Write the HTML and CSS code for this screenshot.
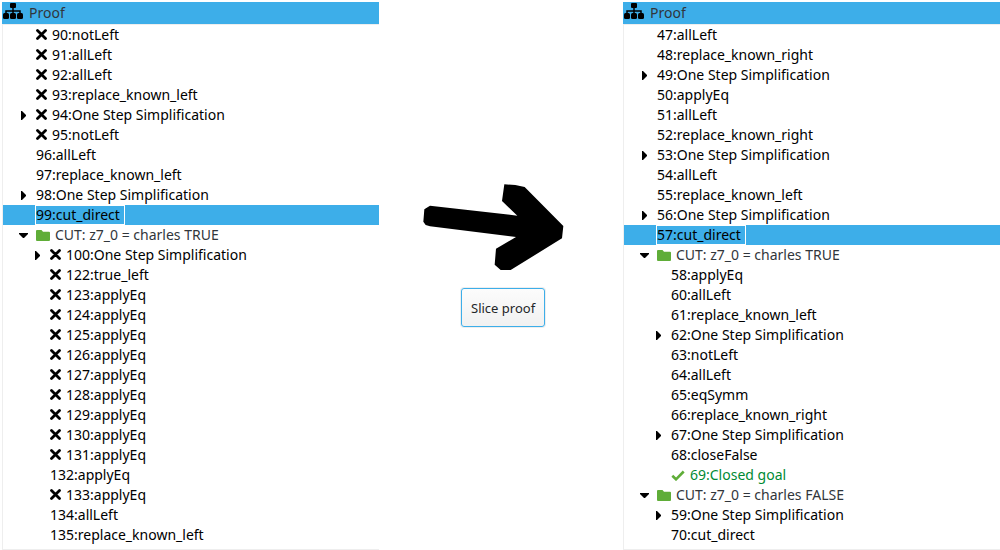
FILE: index.html
```
<!DOCTYPE html>
<html lang="en">
<head>
<meta charset="utf-8">
<title>Proof slicing</title>
<link rel="stylesheet" href="styles.css">
</head>
<body>
<svg class="sprite" aria-hidden="true">
  <symbol id="tree" viewBox="0 0 20 16">
    <rect x="7" y="0" width="6" height="5" rx="1"/>
    <path d="M10 5v6M3 11V8h14v3" fill="none" stroke="#000" stroke-width="1.5"/>
    <rect x="0" y="10" width="6" height="6" rx="1.500"/>
    <rect x="7" y="10" width="6" height="6" rx="1.500"/>
    <rect x="14" y="10" width="6" height="6" rx="1.500"/>
  </symbol>
  <symbol id="cross" viewBox="0 0 11 11">
    <path d="M1.500 1.500l8 8M9.500 1.500l-8 8" fill="none" stroke="#000" stroke-width="2.800" stroke-linecap="round"/>
  </symbol>
  <symbol id="folder" viewBox="0 0 14 11">
    <path d="M1 0h4.500L7 1.700h6a1 1 0 0 1 1 1V10a1 1 0 0 1-1 1H1a1 1 0 0 1-1-1V1a1 1 0 0 1 1-1z" fill="#5fad38"/>
  </symbol>
  <symbol id="check" viewBox="0 0 14 11">
    <path d="M1.300 5.800L5 9.300 12.700 1.500" fill="none" stroke="#5fad38" stroke-width="2.600"/>
  </symbol>
  <symbol id="closed" viewBox="0 0 14 20">
    <path d="M5 6h1l4 4v1l-4 4H5z"/>
  </symbol>
  <symbol id="open" viewBox="0 0 14 20">
    <path d="M3 8h9v1l-4 4H7L3 9z"/>
  </symbol>
</svg>
<main class="layout">
  <section class="panel">
    <h2 class="panel-title"><svg class="tree-icon"><use href="#tree"/></svg>Proof</h2>
    <ul class="rows">
      <li class="row"><svg class="cross"><use href="#cross"/></svg><span class="label">90:notLeft</span></li>
      <li class="row"><svg class="cross"><use href="#cross"/></svg><span class="label">91:allLeft</span></li>
      <li class="row"><svg class="cross"><use href="#cross"/></svg><span class="label">92:allLeft</span></li>
      <li class="row"><svg class="cross"><use href="#cross"/></svg><span class="label">93:replace_known_left</span></li>
      <li class="row parent"><button class="toggle" aria-label="Expand"><svg><use href="#closed"/></svg></button><svg class="cross"><use href="#cross"/></svg><span class="label">94:One Step Simplification</span></li>
      <li class="row"><svg class="cross"><use href="#cross"/></svg><span class="label">95:notLeft</span></li>
      <li class="row"><span class="label">96:allLeft</span></li>
      <li class="row"><span class="label">97:replace_known_left</span></li>
      <li class="row parent"><button class="toggle" aria-label="Expand"><svg><use href="#closed"/></svg></button><span class="label">98:One Step Simplification</span></li>
      <li class="row selected"><span class="label">99:cut_direct</span></li>
      <li class="row parent branch"><button class="toggle" aria-label="Collapse"><svg><use href="#open"/></svg></button><svg class="folder"><use href="#folder"/></svg><span class="label">CUT: z7_0 = charles TRUE</span></li>
      <li class="row nested parent"><button class="toggle" aria-label="Expand"><svg><use href="#closed"/></svg></button><svg class="cross"><use href="#cross"/></svg><span class="label">100:One Step Simplification</span></li>
      <li class="row nested"><svg class="cross"><use href="#cross"/></svg><span class="label">122:true_left</span></li>
      <li class="row nested"><svg class="cross"><use href="#cross"/></svg><span class="label">123:applyEq</span></li>
      <li class="row nested"><svg class="cross"><use href="#cross"/></svg><span class="label">124:applyEq</span></li>
      <li class="row nested"><svg class="cross"><use href="#cross"/></svg><span class="label">125:applyEq</span></li>
      <li class="row nested"><svg class="cross"><use href="#cross"/></svg><span class="label">126:applyEq</span></li>
      <li class="row nested"><svg class="cross"><use href="#cross"/></svg><span class="label">127:applyEq</span></li>
      <li class="row nested"><svg class="cross"><use href="#cross"/></svg><span class="label">128:applyEq</span></li>
      <li class="row nested"><svg class="cross"><use href="#cross"/></svg><span class="label">129:applyEq</span></li>
      <li class="row nested"><svg class="cross"><use href="#cross"/></svg><span class="label">130:applyEq</span></li>
      <li class="row nested"><svg class="cross"><use href="#cross"/></svg><span class="label">131:applyEq</span></li>
      <li class="row nested"><span class="label">132:applyEq</span></li>
      <li class="row nested"><svg class="cross"><use href="#cross"/></svg><span class="label">133:applyEq</span></li>
      <li class="row nested"><span class="label">134:allLeft</span></li>
      <li class="row nested"><span class="label">135:replace_known_left</span></li>
    </ul>
  </section>
  <div class="action">
    <svg class="arrow" viewBox="69 42 423 258" aria-hidden="true">
      <path d="M70 155L73 118 90 107 352 137 306 93 313 43 346 45 374 51 490 168 486 205 332 300H302L284 284 288 236 348 201 90 169 77 165z"/>
    </svg>
    <button class="slice">Slice proof</button>
  </div>
  <section class="panel">
    <h2 class="panel-title"><svg class="tree-icon"><use href="#tree"/></svg>Proof</h2>
    <ul class="rows">
      <li class="row"><span class="label">47:allLeft</span></li>
      <li class="row"><span class="label">48:replace_known_right</span></li>
      <li class="row parent"><button class="toggle" aria-label="Expand"><svg><use href="#closed"/></svg></button><span class="label">49:One Step Simplification</span></li>
      <li class="row"><span class="label">50:applyEq</span></li>
      <li class="row"><span class="label">51:allLeft</span></li>
      <li class="row"><span class="label">52:replace_known_right</span></li>
      <li class="row parent"><button class="toggle" aria-label="Expand"><svg><use href="#closed"/></svg></button><span class="label">53:One Step Simplification</span></li>
      <li class="row"><span class="label">54:allLeft</span></li>
      <li class="row"><span class="label">55:replace_known_left</span></li>
      <li class="row parent"><button class="toggle" aria-label="Expand"><svg><use href="#closed"/></svg></button><span class="label">56:One Step Simplification</span></li>
      <li class="row selected"><span class="label">57:cut_direct</span></li>
      <li class="row parent branch"><button class="toggle" aria-label="Collapse"><svg><use href="#open"/></svg></button><svg class="folder"><use href="#folder"/></svg><span class="label">CUT: z7_0 = charles TRUE</span></li>
      <li class="row nested"><span class="label">58:applyEq</span></li>
      <li class="row nested"><span class="label">60:allLeft</span></li>
      <li class="row nested"><span class="label">61:replace_known_left</span></li>
      <li class="row nested parent"><button class="toggle" aria-label="Expand"><svg><use href="#closed"/></svg></button><span class="label">62:One Step Simplification</span></li>
      <li class="row nested"><span class="label">63:notLeft</span></li>
      <li class="row nested"><span class="label">64:allLeft</span></li>
      <li class="row nested"><span class="label">65:eqSymm</span></li>
      <li class="row nested"><span class="label">66:replace_known_right</span></li>
      <li class="row nested parent"><button class="toggle" aria-label="Expand"><svg><use href="#closed"/></svg></button><span class="label">67:One Step Simplification</span></li>
      <li class="row nested"><span class="label">68:closeFalse</span></li>
      <li class="row nested goal"><svg class="folder"><use href="#check"/></svg><span class="label">69:Closed goal</span></li>
      <li class="row parent branch"><button class="toggle" aria-label="Collapse"><svg><use href="#open"/></svg></button><svg class="folder"><use href="#folder"/></svg><span class="label">CUT: z7_0 = charles FALSE</span></li>
      <li class="row nested parent"><button class="toggle" aria-label="Expand"><svg><use href="#closed"/></svg></button><span class="label">59:One Step Simplification</span></li>
      <li class="row nested"><span class="label">70:cut_direct</span></li>
    </ul>
  </section>
</main>
</body>
</html>
```
FILE: styles.css
```
* {
  box-sizing: border-box;
}

body {
  margin: 0;
  background: #fff;
  color: #000;
  font: 14px/20px "Noto Sans", sans-serif;
}

.sprite {
  display: none;
}

.layout {
  display: grid;
  grid-template-columns: 1fr 244px 1fr;
  padding: 2px 0 0 2px;
}

.panel-title {
  display: flex;
  align-items: center;
  gap: 6px;
  height: 22px;
  margin: 0;
  padding-left: 1px;
  background: #3daee9;
  color: #31363b;
  font-size: 14px;
  font-weight: 400;
}

.tree-icon {
  width: 20px;
  height: 16px;
  margin-bottom: 4px;
}

.rows {
  margin: 0;
  padding: 0 0 4px;
  border: 1px solid #eee;
  border-right: 0;
  list-style: none;
}

.row {
  display: flex;
  align-items: center;
  height: 20px;
  padding-left: 32px;
  white-space: nowrap;
}

.row.parent {
  padding-left: 13px;
}

.row.nested {
  padding-left: 46px;
}

.row.nested.parent {
  padding-left: 27px;
}

.toggle {
  width: 14px;
  height: 20px;
  margin-right: 5px;
  padding: 0;
  border: 0;
  background: none;
}

.toggle svg {
  display: block;
  width: 14px;
  height: 20px;
}

.cross {
  width: 11px;
  height: 11px;
  margin: 0 4px 2px 1px;
}

.folder {
  width: 14px;
  height: 11px;
  margin: 0 4px 0 1px;
}

.label {
  height: 20px;
  padding-right: 4px;
  border: 1px solid transparent;
  line-height: 18px;
}

.selected {
  background: #3daee9;
}

.selected .label {
  border-color: #fff;
}

.branch {
  color: #31363b;
}

.goal {
  color: #008a34;
}

.action {
  display: flex;
  flex-direction: column;
  align-items: flex-start;
  gap: 18px;
  padding: 182px 0 0 44px;
}

.arrow {
  width: 141px;
  height: 86px;
}

.slice {
  height: 39px;
  margin-left: 38px;
  padding: 0 9px;
  border: 1px solid #3daee9;
  border-radius: 3px;
  background: linear-gradient(#fcfcfc, #f1f1f1);
  box-shadow: 0 0 0 1px #eee;
  color: #232629;
  font: 13px/20px "Noto Sans", sans-serif;
}
```
